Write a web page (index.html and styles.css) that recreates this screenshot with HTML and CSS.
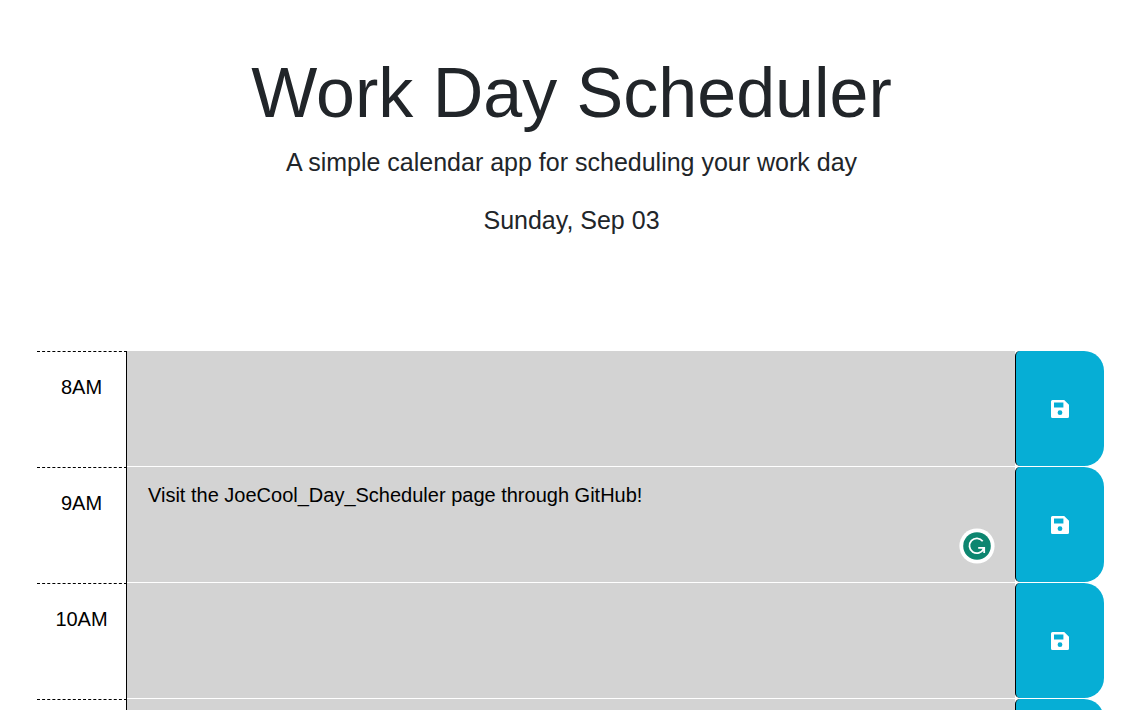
FILE: index.html
```html
<!DOCTYPE html>
<html lang="en">
<head>
<meta charset="utf-8">
<title>Work Day Scheduler</title>
<link rel="stylesheet" href="styles.css">
</head>
<body>
<svg class="defs" width="0" height="0" aria-hidden="true">
  <symbol id="save" viewBox="0 0 18 18">
    <path fill="#fff" fill-rule="evenodd" d="M1.5 0H13.2L18 4.8V16.5Q18 18 16.5 18H1.5Q0 18 0 16.5V1.5Q0 0 1.5 0ZM3 2.6V7.6H12.4V2.6ZM9 10.3A2.4 2.4 0 1 0 9 15.1A2.4 2.4 0 1 0 9 10.3Z"/>
  </symbol>
</svg>
<header class="intro">
  <h1 class="title">Work Day Scheduler</h1>
  <p class="lead">A simple calendar app for scheduling your work day</p>
  <p class="lead">Sunday, Sep 03</p>
</header>
<main class="schedule">
  <section class="row">
    <div class="hour">8AM</div>
    <div class="description"></div>
    <button class="save" aria-label="Save"><svg class="save-icon"><use href="#save"/></svg></button>
  </section>
  <section class="row">
    <div class="hour">9AM</div>
    <div class="description"><span class="event">Visit the JoeCool_Day_Scheduler page through GitHub!</span>
      <svg class="badge" viewBox="0 0 36 36">
        <circle cx="18" cy="18" r="17.6" fill="#fff"/>
        <circle cx="18" cy="18" r="13.8" fill="#0d8670"/>
        <path d="M23.7 13.2A7.4 7.4 0 1 0 24.6 20.8M19.2 19.8H25.2V25" fill="none" stroke="#fff" stroke-width="1.8"/>
      </svg>
    </div>
    <button class="save" aria-label="Save"><svg class="save-icon"><use href="#save"/></svg></button>
  </section>
  <section class="row">
    <div class="hour">10AM</div>
    <div class="description"></div>
    <button class="save" aria-label="Save"><svg class="save-icon"><use href="#save"/></svg></button>
  </section>
  <section class="row">
    <div class="hour">11AM</div>
    <div class="description"></div>
    <button class="save" aria-label="Save"><svg class="save-icon"><use href="#save"/></svg></button>
  </section>
</main>
</body>
</html>
```
FILE: styles.css
```css
* { box-sizing: border-box; }
html { overflow: hidden; }
body {
  margin: 0;
  height: 710px;
  overflow: hidden;
  background: #fff;
  color: #212529;
  font-family: "Liberation Sans", Arial, sans-serif;
}
.defs { display: block; }
.intro {
  height: 351px;
  padding-top: 51px;
  text-align: center;
}
.title {
  margin: 0 0 8px;
  font-size: 70px;
  font-weight: 400;
  line-height: 84px;
}
.lead {
  margin: 0 0 20px;
  font-size: 25px;
  line-height: 38px;
}
.schedule { padding: 0 39px 0 37px; }
.row {
  display: grid;
  grid-template-columns: 90px 1fr 89px;
  height: 116px;
}
.hour {
  padding-top: 20px;
  border-top: 1px dashed #000;
  border-right: 1px solid #000;
  color: #000;
  font-size: 20px;
  line-height: 30px;
  text-align: center;
}
.description {
  position: relative;
  height: 115px;
  padding: 13px 21px;
  background: #d3d3d3;
  color: #000;
  font-size: 20px;
  line-height: 30px;
}
.badge {
  position: absolute;
  right: 20px;
  bottom: 18px;
  width: 36px;
  height: 36px;
}
.save {
  display: flex;
  align-items: center;
  justify-content: center;
  height: 115px;
  padding: 0;
  border: 0;
  border-left: 1px solid #000;
  border-radius: 5px 20px 20px 5px;
  background: #06aed5;
}
.save-icon { width: 18px; height: 18px; }
```
